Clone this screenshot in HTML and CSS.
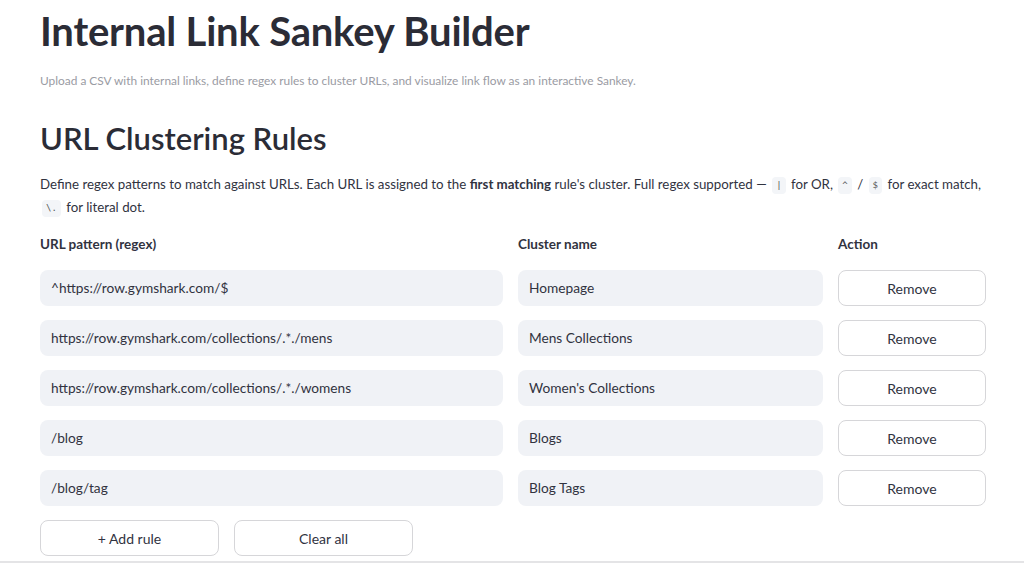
FILE: index.html
```html
<!DOCTYPE html>
<html lang="en">
<head>
<meta charset="utf-8">
<title>Internal Link Sankey Builder</title>
<link rel="stylesheet" href="styles.css">
</head>
<body>
<main class="page">
  <h1 class="title">Internal Link Sankey Builder</h1>
  <p class="caption">Upload a CSV with internal links, define regex rules to cluster URLs, and visualize link flow as an interactive Sankey.</p>
  <h2 class="subtitle">URL Clustering Rules</h2>
  <p class="intro">Define regex patterns to match against URLs. Each URL is assigned to the <strong>first matching</strong> rule's cluster. Full regex supported — <code>|</code> for OR, <code>^</code> / <code>$</code> for exact match, <code>\.</code> for literal dot.</p>

  <div class="rules">
    <div class="head">URL pattern (regex)</div>
    <div class="head">Cluster name</div>
    <div class="head">Action</div>

    <div class="field">^https://row.gymshark.com/$</div>
    <div class="field">Homepage</div>
    <button class="btn">Remove</button>

    <div class="field">https://row.gymshark.com/collections/.*./mens</div>
    <div class="field">Mens Collections</div>
    <button class="btn">Remove</button>

    <div class="field">https://row.gymshark.com/collections/.*./womens</div>
    <div class="field">Women's Collections</div>
    <button class="btn">Remove</button>

    <div class="field">/blog</div>
    <div class="field">Blogs</div>
    <button class="btn">Remove</button>

    <div class="field">/blog/tag</div>
    <div class="field">Blog Tags</div>
    <button class="btn">Remove</button>
  </div>

  <div class="actions">
    <button class="btn wide">+ Add rule</button>
    <button class="btn wide">Clear all</button>
  </div>
</main>
<div class="rule-line"></div>
</body>
</html>
```
FILE: styles.css
```css
html, body {
  margin: 0;
  padding: 0;
  background: #ffffff;
}
body {
  font-family: "Lato", "Noto Sans", sans-serif;
  color: #31333f;
  height: 564px;
  overflow: hidden;
  position: relative;
}
.page {
  padding: 7px 38px 0 40px;
}
.title {
  margin: 0;
  font-size: 40px;
  font-weight: 700;
  line-height: 48px;
  color: #2b2c36;
  letter-spacing: -0.2px;
}
.caption {
  margin: 17px 0 0;
  font-size: 11.9px;
  line-height: 18px;
  color: #9a9ba3;
}
.subtitle {
  margin: 28px 0 0;
  font-size: 31px;
  font-weight: 600;
  line-height: 40px;
  color: #2b2c36;
}
.intro {
  margin: 15px 0 0;
  font-size: 13.3px;
  line-height: 23px;
  color: #31333f;
}
.intro strong {
  font-weight: 700;
}
.intro code {
  display: inline-block;
  font-family: "DejaVu Sans Mono", monospace;
  font-size: 9px;
  line-height: 15px;
  background: #f3f5f8;
  border-radius: 4px;
  padding: 1px 4px;
  color: #555;
  margin: 0 2px;
  vertical-align: 1px;
}
.rules {
  margin-top: 15px;
  display: grid;
  grid-template-columns: 463px 305px 148px;
  column-gap: 15px;
  row-gap: 14px;
  align-items: center;
}
.head {
  font-size: 13.5px;
  font-weight: 700;
  line-height: 20px;
  margin-bottom: 2px;
}
.field {
  height: 36px;
  line-height: 36px;
  background: #f0f2f6;
  border-radius: 8px;
  padding: 0 11px;
  font-size: 13.7px;
  color: #31333f;
  white-space: nowrap;
  overflow: hidden;
}
.btn {
  height: 36px;
  background: #ffffff;
  border: 1px solid #d6d6d9;
  border-radius: 8px;
  font-family: inherit;
  font-size: 14px;
  color: #31333f;
  padding: 0;
}
.actions {
  margin-top: 14px;
  display: flex;
  gap: 15px;
}
.btn.wide {
  width: 179px;
}
.rule-line {
  position: absolute;
  left: 0;
  right: 0;
  top: 561px;
  height: 2px;
  background: #e4e4e6;
}
```
